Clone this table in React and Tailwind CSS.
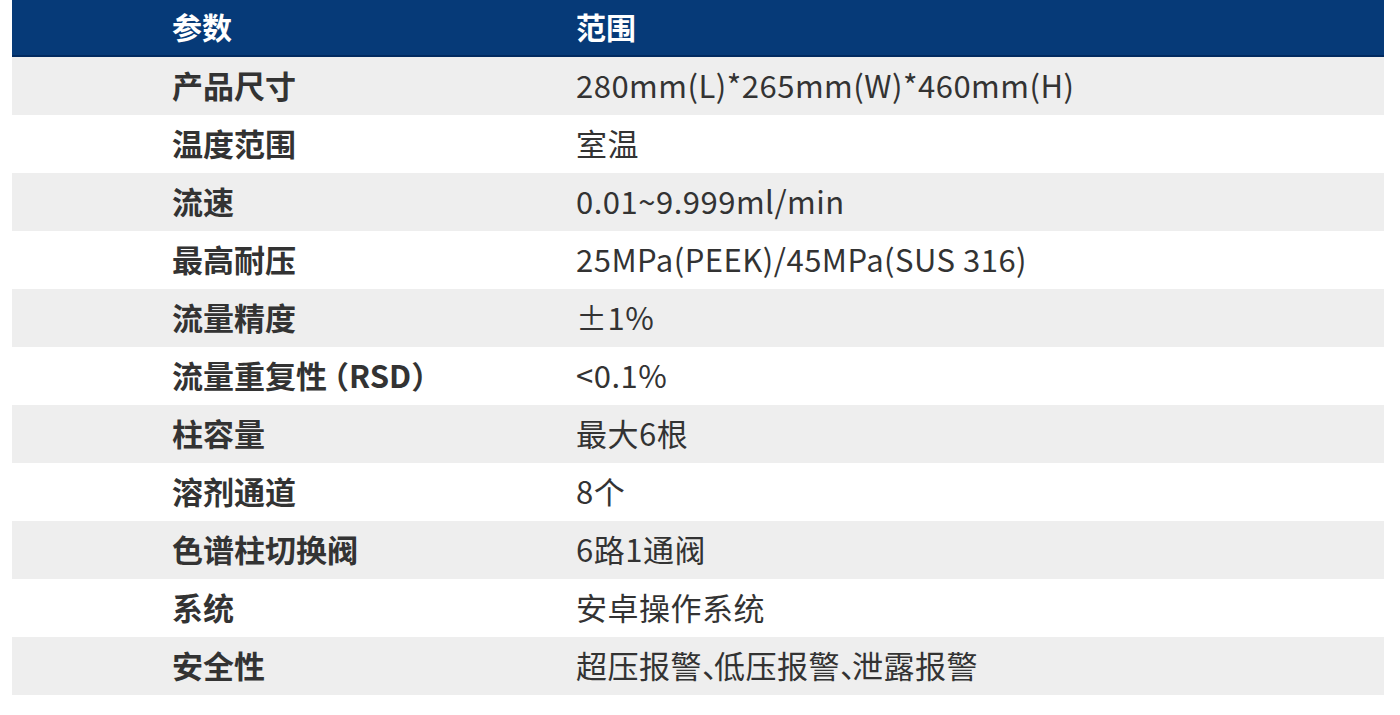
import React from "react";

const Dun = () => <span className="inline-block w-[12px]">、</span>;

const rows = [
  ["产品尺寸", "280mm(L)*265mm(W)*460mm(H)"],
  ["温度范围", "室温"],
  ["流速", "0.01~9.999ml/min"],
  ["最高耐压", "25MPa(PEEK)/45MPa(SUS 316)"],
  ["流量精度", "±1%"],
  [
    <>
      流量重复性<span className="ml-[-9px]">（</span>RSD
      <span className="mr-[-12px]">）</span>
    </>,
    "<0.1%",
  ],
  ["柱容量", "最大6根"],
  ["溶剂通道", "8个"],
  ["色谱柱切换阀", "6路1通阀"],
  ["系统", "安卓操作系统"],
  [
    "安全性",
    <>
      超压报警
      <Dun />
      低压报警
      <Dun />
      泄露报警
    </>,
  ],
];

const App = () => {
  return (
    <div className="w-[1400px] h-[715px] bg-white pl-[12px] pr-[16px] font-['Noto_Sans_CJK_SC','Noto_Sans',sans-serif]">
      <div className="flex h-[57px] items-center bg-[#063a78] border-b-2 border-[#012a60] text-white text-[30px] font-bold leading-none pb-[3px]">
        <div className="w-[564px] pl-[160px]">参数</div>
        <div className="flex-1">范围</div>
      </div>
      {rows.map((r, i) => (
        <div
          key={i}
          className={
            i % 2 === 0
              ? "flex h-[58px] items-center bg-[#eeeeee] text-[#333333] text-[31px] leading-none pb-[4px]"
              : "flex h-[58px] items-center bg-white text-[#333333] text-[31px] leading-none pb-[4px]"
          }
        >
          <div className="w-[564px] pl-[160px] font-bold">{r[0]}</div>
          <div className="flex-1 tracking-[0.5px]">{r[1]}</div>
        </div>
      ))}
    </div>
  );
};

export default App;
